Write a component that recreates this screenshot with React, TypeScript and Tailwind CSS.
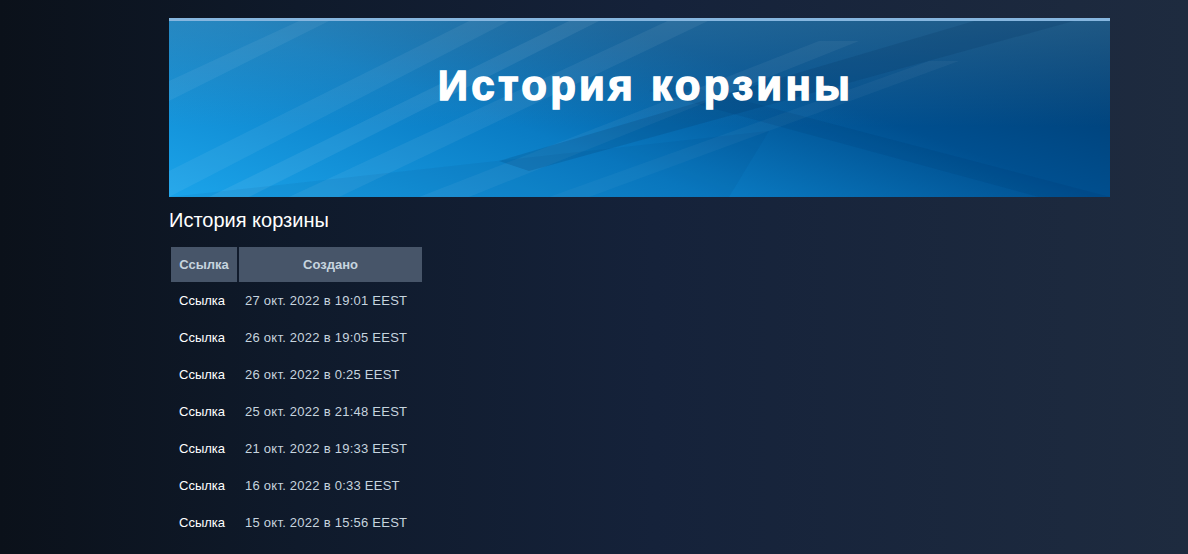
const rows = [
  "27 окт. 2022 в 19:01 EEST",
  "26 окт. 2022 в 19:05 EEST",
  "26 окт. 2022 в 0:25 EEST",
  "25 окт. 2022 в 21:48 EEST",
  "21 окт. 2022 в 19:33 EEST",
  "16 окт. 2022 в 0:33 EEST",
  "15 окт. 2022 в 15:56 EEST",
];

const BannerStripes = () => (
  <svg
    className="absolute inset-0 w-full h-full"
    viewBox="0 0 941 176"
    preserveAspectRatio="none"
  >
    <g fill="#ffffff">
      <polygon points="0,150 300,0 340,0 0,176" opacity="0.06" />
      <polygon points="40,176 400,0 430,0 80,176" opacity="0.07" />
      <polygon points="120,176 520,-10 560,-10 170,176" opacity="0.06" />
      <polygon points="0,60 130,0 160,0 0,80" opacity="0.06" />
      <polygon points="250,176 650,20 690,20 300,176" opacity="0.05" />
      <polygon points="380,176 760,40 790,40 420,176" opacity="0.04" />
    </g>
    <g fill="#002a55">
      <polygon points="330,140 941,-40 941,-10 360,150" opacity="0.16" />
      <polygon points="500,60 941,176 870,176 480,70" opacity="0.1" />
      <polygon points="0,176 560,176 600,110" opacity="0.06" />
    </g>
  </svg>
);

export default function App() {
  return (
    <div className="min-h-[554px] w-full bg-[linear-gradient(90deg,#0b111a_0%,#0f1a2b_25%,#15223a_55%,#1e2b3f_100%)] font-['Liberation_Sans',Arial,sans-serif] pt-[18px]">
      <div className="ml-[169px] w-[941px]">
        <div className="relative h-[179px] border-t-[3px] border-[#86b6df] overflow-hidden bg-[linear-gradient(200deg,#00376a_0%,#004f8f_35%,#0a7cc4_62%,#1ba4ea_100%)]">
          <div className="absolute inset-0 bg-[linear-gradient(180deg,rgba(90,150,180,0.35)_0%,rgba(90,150,180,0)_60%)]" />
          <BannerStripes />
          <h1 className="relative pt-[41px] pl-[12px] text-center text-[42px] leading-[48px] font-bold text-white tracking-[3.3px] [-webkit-text-stroke:1.4px_white]">
            История корзины
          </h1>
        </div>
        <h2 className="mt-[11px] text-[20px] leading-[24px] text-white">
          История корзины
        </h2>
        <table className="mt-[15px] ml-[2px] border-separate border-spacing-0 text-[13px]">
          <thead>
            <tr>
              <th className="h-[35px] w-[66px] bg-[#475569] text-[#c6d4df] font-bold text-center">
                Ссылка
              </th>
              <th className="h-[35px] w-[185px] bg-[#475569] text-[#c6d4df] font-bold text-center border-l-2 border-[#111b2c]">
                Создано
              </th>
            </tr>
          </thead>
          <tbody>
            {rows.map((d, i) => (
              <tr key={i}>
                <td className="h-[37px] pt-[1px] text-white pl-[8px]">Ссылка</td>
                <td className="h-[37px] pt-[1px] text-[#c6d4df] pl-[8px] tracking-[0.25px]">
                  {d}
                </td>
              </tr>
            ))}
          </tbody>
        </table>
      </div>
    </div>
  );
}
